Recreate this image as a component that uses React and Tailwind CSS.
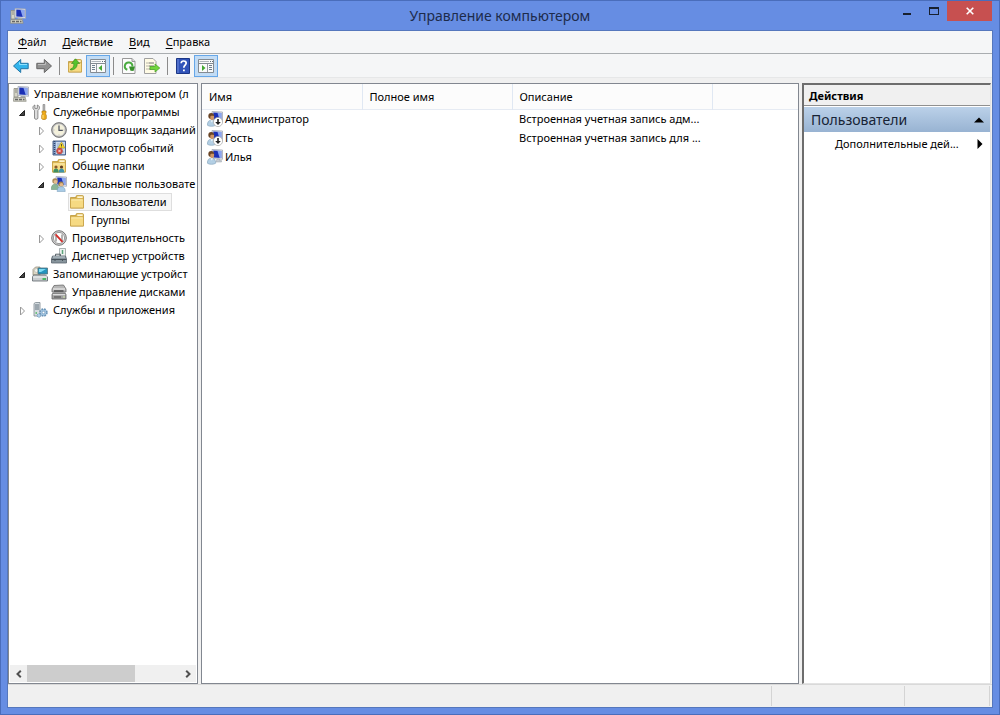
import React from "react";

function Icon({ children, className = "" }) {
  return (
    <svg viewBox="0 0 16 16" width="16" height="16" className={`block shrink-0 ${className}`} aria-hidden="true">
      {children}
    </svg>
  );
}

function Screen() {
  return (
    <>
      <path d="M5 .5 15.500 1V10.300L5 9.500Z" fill="#dfe4ec" stroke="#a4abb8" strokeWidth=".8" />
      <path d="M6.300 1.600 14.300 2.100V9L6.300 8.400Z" fill="#1b30b5" />
      <path d="M10.500 1.900 14.300 2.100V9L12.700 8.900Z" fill="#8ba6f0" />
    </>
  );
}

function ComputerIcon() {
  return (
    <Icon>
      <path d="M1 2.500h4v8.500H1z" fill="#d6d5c8" stroke="#8b8b80" strokeWidth=".8" />
      <path d="M2 4h2M2 6h2" stroke="#77776d" strokeWidth=".8" />
      <Screen />
      <path d="M8 10h4l1 1.500H7z" fill="#a6acb2" />
      <path d="M.7 11.500h11.500l1 3.800H.5z" fill="#d0d0c4" stroke="#8b8b80" strokeWidth=".7" />
      <path d="M2 13.500h9.500" stroke="#666" strokeWidth="1.500" strokeDasharray="3 1" />
    </Icon>
  );
}

function ToolsIcon() {
  return (
    <Icon>
      <path d="M2.900 1v3.400h2.400V1c1.700.6 2.200 1.700 2.200 2.800 0 1.300-.8 2-1.600 2.500v7.800c0 1.600-3.400 1.600-3.400 0V6.300C1.700 5.800.9 5 .9 3.800c0-1.200.5-2.300 2-2.800z" fill="#ddd" stroke="#747474" strokeWidth=".8" />
      <path d="M11 .5h1.800v6H11z" fill="#bbb" stroke="#777" strokeWidth=".6" />
      <path d="M10 7h4v2l-.6.8.9 1.500v3.200c0 1.400-4.600 1.400-4.600 0v-3.200l.8-1.500-.5-.8z" fill="#efac19" stroke="#b37b16" strokeWidth=".7" />
      <path d="M11 11v3.500" stroke="#ffe18b" />
    </Icon>
  );
}

function ClockIcon() {
  return (
    <Icon>
      <circle cx="8" cy="8" r="7.400" fill="#aaa" stroke="#686868" strokeWidth=".8" />
      <circle cx="8" cy="8" r="5.900" fill="#f4f1dc" stroke="#ddd" strokeWidth=".6" />
      <path d="M8 3.500V8.300H11.800" fill="none" stroke="#4d5360" strokeWidth="1.200" />
      <path d="M8 2.500v1M8 12.500v1M2.500 8h1M12.500 8h1" stroke="#999" strokeWidth=".7" />
    </Icon>
  );
}

function EventIcon() {
  return (
    <Icon>
      <path d="M2 1h12.500v14H2z" fill="#8aa6cd" stroke="#3f5785" strokeWidth=".9" />
      <path d="M5 2h9v12H5z" fill="#cbd8ec" />
      <path d="M3.500 1v14" stroke="#33476f" strokeDasharray="1 1" strokeWidth="1.500" />
      <path d="M6 4h7M6 6h7M6 8h7M6 12h7" stroke="#7690b7" strokeWidth=".6" />
      <path d="M10.500 2 14 8H7z" fill="#f9d92a" stroke="#a99016" strokeWidth=".5" />
      <path d="M10.500 4v2M10.500 6.500v.8" stroke="#333" strokeWidth=".8" />
      <circle cx="8.500" cy="11" r="3" fill="#d84b43" stroke="#963630" strokeWidth=".5" />
      <path d="m7.300 9.800 2.400 2.400m0-2.400-2.400 2.400" stroke="#fff" strokeWidth=".8" />
    </Icon>
  );
}

function FolderShape() {
  return (
    <>
      <path d="M1.500 3.500h5.500V2.600c0-.6.3-1 .8-1h5.700c.6 0 1 .4 1 1V14h-13z" fill="#e7c05a" stroke="#b99539" strokeWidth=".8" />
      <path d="M8.300 2.400h5.300v1.500H8.300z" fill="#fffbe3" />
      <path d="M1.500 5h13v9h-13z" fill="#f6da83" stroke="#c8a249" strokeWidth=".8" />
      <path d="M2.300 5.900h11.400" stroke="#fff0b5" />
    </>
  );
}

function FolderIcon() {
  return <Icon><FolderShape /></Icon>;
}

function SharedFolderIcon() {
  return (
    <Icon>
      <FolderShape />
      <circle cx="5" cy="9" r="1.600" fill="#8b5a2b" />
      <path d="M2.300 14.500c0-3 1-4 2.700-4s2.700 1 2.700 4z" fill="#3f8f62" />
      <circle cx="10.500" cy="9" r="1.600" fill="#623c23" />
      <path d="M7.800 14.500c0-3 1.200-4 2.700-4s2.800 1 2.800 4z" fill="#3f93a8" />
    </Icon>
  );
}

function UsersIcon() {
  return (
    <Icon>
      <Screen />
      <circle cx="4" cy="5" r="2.700" fill="#a98a58" />
      <circle cx="4.500" cy="5.800" r="1.900" fill="#e6bd8f" />
      <path d="M.3 13.500c0-4 1.500-5.300 3.700-5.300s3.700 1.500 3.700 5.300z" fill="#8ab595" stroke="#5f8a6e" strokeWidth=".5" />
      <circle cx="10" cy="8" r="2.600" fill="#a1854f" />
      <circle cx="10.400" cy="8.700" r="1.800" fill="#e3b788" />
      <path d="M6.200 15.600c0-3.700 1.500-4.900 4-4.900s4 1.200 4 4.900z" fill="#a8cbe6" stroke="#6c93b3" strokeWidth=".5" />
    </Icon>
  );
}

function UserIcon({ disabled }) {
  return (
    <Icon>
      <Screen />
      <path d="M10 10h2.500v1.500h2V13H9z" fill="#c6cbd2" stroke="#99a0aa" strokeWidth=".5" />
      <circle cx="4.200" cy="5" r="2.900" fill="#6b4526" />
      <path d="M3.400 5.200c1-.8 2.500-.6 3.700-.1.300 2.300-.6 4.400-2 4.400-1.400 0-2.200-1.900-1.700-4.300z" fill="#cf9765" />
      <path d="M.4 14.200c0-3.400 1.300-5 4-5 2.800 0 4.300 1.600 4.300 5-1.800 1.500-6.800 1.500-8.300 0z" fill="#b3cfe4" stroke="#7f9fb9" strokeWidth=".6" />
      <path d="m3.500 9.300 1.300 2.200 1.300-2.200" fill="#eef6fb" />
      {disabled && (
        <>
          <circle cx="11" cy="11" r="4.600" fill="#fff" stroke="#a5a5a5" strokeWidth=".7" />
          <path d="M10.200 8h1.600v3h2L11 14l-2.800-3h2z" fill="#222" />
        </>
      )}
    </Icon>
  );
}

function GaugeIcon() {
  return (
    <Icon>
      <circle cx="8" cy="8" r="7.300" fill="#d5d5d5" stroke="#747474" />
      <circle cx="8" cy="8" r="5.600" fill="#fff" stroke="#888" strokeWidth=".8" />
      <path d="M5 11.500V6M11 4.500V11" stroke="#555" strokeWidth=".9" />
      <path d="m4.500 4.300 7 7.500" stroke="#d32d29" strokeWidth="1.900" />
    </Icon>
  );
}

function DeviceIcon() {
  return (
    <Icon>
      <path d="M8.500.5h6v9h-6z" fill="#edf1ef" stroke="#8b9493" strokeWidth=".7" />
      <path d="M11.500 2v4" stroke="#5ba57b" strokeWidth="1.500" />
      <path d="M4.500 8V6.200h5V8" fill="none" stroke="#555f65" />
      <path d="M1.500 8h13l1 3v4H.5v-4z" fill="#87949c" stroke="#5a656e" strokeWidth=".8" />
      <path d="M2 9h12" stroke="#c2cdd3" />
      <path d="M.7 11.500h14.600M4 11v2M11.500 11v2" stroke="#48535b" />
    </Icon>
  );
}

function StorageIcon() {
  return (
    <Icon>
      <path d="M1 3.500 3.500 1H8v8H1z" fill="#ddd7c4" stroke="#888171" strokeWidth=".7" />
      <circle cx="4.500" cy="4.500" r="2" fill="#f2f1e7" stroke="#aaa" strokeWidth=".5" />
      <path d="M6 2h9.500v6H6z" fill="#2392bd" stroke="#50717c" strokeWidth=".8" />
      <path d="M7 3h7l-5 3H7z" fill="#7edcf4" />
      <path d="M1.500 9h12l2 2v4H.5v-4z" fill="#c8cccf" stroke="#5d656b" strokeWidth=".8" />
      <path d="M1 11h14" stroke="#f4f5f5" />
      <path d="M10.500 13h3.500" stroke="#16ae37" strokeWidth="1.400" />
    </Icon>
  );
}

function DiskIcon() {
  return (
    <Icon>
      <path d="m3 1.500 9.500-.5 2.500 4v3H1V5z" fill="#b6b6b6" stroke="#6a6a6a" strokeWidth=".8" />
      <path d="M2 5h12" stroke="#f0f0f0" />
      <path d="M3 7h9.500" stroke="#4d4d4d" strokeWidth="1.500" />
      <path d="M2 9h12l1 1.500V15H1v-4.500z" fill="#a0a0a0" stroke="#666" strokeWidth=".8" />
      <path d="M2 10.700h12" stroke="#ececec" />
      <path d="M3 13h7" stroke="#4b4b4b" />
      <path d="M12 13h2" stroke="#d4ecac" />
    </Icon>
  );
}

function ServicesIcon() {
  return (
    <Icon>
      <path d="M2 1.500 3.500.5H8v13.500H2z" fill="#d7dde1" stroke="#7d8990" strokeWidth=".8" />
      <path d="M3 3h4M3 5h4M3 7h4" stroke="#60717d" />
      <path d="M3.500 11h1.500" stroke="#49b75b" strokeWidth="1.500" />
      <circle cx="11.500" cy="10.500" r="3.400" fill="#a8cae6" stroke="#6c95b7" strokeWidth="1.700" strokeDasharray="1.700 1" />
      <circle cx="11.500" cy="10.500" r="1.300" fill="#fff" stroke="#6c95b7" strokeWidth=".7" />
      <circle cx="7" cy="13.500" r="1.800" fill="#afd0e8" stroke="#6c95b7" strokeDasharray="1.200 .7" />
    </Icon>
  );
}

function ArrowIcon({ forward }) {
  return (
    <Icon>
      {forward ? (
        <path d="M.8 5.300h7.500V1.500L15.500 8l-7.200 6.500v-3.800H.8z" fill="#929292" stroke="#666" />
      ) : (
        <path d="M15.200 5.300H7.700V1.500L.5 8l7.200 6.500v-3.800h7.500z" fill="#32b4ec" stroke="#2476a7" />
      )}
      <path d={forward ? "M2 6.500h7.500V4.300" : "M14 6.500H6.500V4.300"} stroke={forward ? "#bebebe" : "#8de1ff"} fill="none" />
    </Icon>
  );
}

function UpFolderIcon() {
  return (
    <Icon>
      <FolderShape />
      <path d="M3.500 11c2.500-.5 3.500-2.500 3.300-5.500H4.500L8.500.8l4.200 4.700h-2.500c.2 4-2.700 6.500-6.700 6.500z" fill="#55c42d" stroke="#348519" strokeWidth=".6" />
    </Icon>
  );
}

function PaneIcon({ right }) {
  return (
    <Icon>
      <path d="M.5 1.500h15v13H.5z" fill="#fafafa" stroke="#848b92" />
      <path d="M1 5.500h14" stroke="#848b92" />
      <path d="M1.500 3.500h9.500" stroke="#b1b7bc" />
      <path d="M12 3.500h1M14 3.500h1" stroke="#5f6d78" />
      {right ? (
        <>
          <path d="M9.500 6v8" stroke="#9198a0" />
          <path d="M11 7.500h3M11 9.500h3M11 11.500h3" stroke="#6f7f8c" />
          <path d="m4 7 3.500 3L4 13z" fill="#43a832" />
        </>
      ) : (
        <>
          <path d="M6.500 6v8" stroke="#9198a0" />
          <path d="M2 7.500h3M2 9.500h3M2 11.500h3" stroke="#6f7f8c" />
          <path d="M12 7 8.500 10 12 13z" fill="#43a832" />
        </>
      )}
    </Icon>
  );
}

function RefreshIcon() {
  return (
    <Icon>
      <path d="M1.500.5H11l3 3v12H1.500z" fill="#fcfcfc" stroke="#999" />
      <path d="M11 .5v3h3" fill="#ddd" stroke="#999" />
      <path d="M6.300 11.800a3.800 3.800 0 1 1 5.100-3.300" fill="none" stroke="#4aab40" strokeWidth="2" />
      <path d="M8 8.500h6L12.500 13 9.500 12.800z" fill="#39912e" />
    </Icon>
  );
}

function ExportIcon() {
  return (
    <Icon>
      <path d="M.5.5H9l3 3v12H.5z" fill="#fffbe5" stroke="#a0a0a0" />
      <path d="M2.500 5h1M4.500 5H10M2.500 8h1M4.500 8H10M2.500 11h1M4.500 11H10" stroke="#727272" />
      <path d="M6 8.500h5V6L15.800 10 11 14v-2.500H6z" fill="#71d63c" stroke="#48a024" strokeWidth=".7" />
    </Icon>
  );
}

function HelpIcon() {
  return (
    <Icon>
      <path d="M1.500.5h13v15h-13z" fill="#3053b9" stroke="#1b3686" />
      <path d="M3 1v14" stroke="#6f8cdb" />
      <path d="M6.200 5.300c0-3 5-3 5-.2 0 2-2.400 2-2.400 4.700" stroke="#fff" strokeWidth="1.700" fill="none" />
      <path d="M8 11.500h1.800v1.800H8z" fill="#fff" />
    </Icon>
  );
}

const tree = [
  { text: "Управление компьютером (л", icon: ComputerIcon, level: 0 },
  { text: "Служебные программы", icon: ToolsIcon, level: 1, state: "open" },
  { text: "Планировщик заданий", icon: ClockIcon, level: 2, state: "closed" },
  { text: "Просмотр событий", icon: EventIcon, level: 2, state: "closed" },
  { text: "Общие папки", icon: SharedFolderIcon, level: 2, state: "closed" },
  { text: "Локальные пользовате", icon: UsersIcon, level: 2, state: "open" },
  { text: "Пользователи", icon: FolderIcon, level: 3, selected: true },
  { text: "Группы", icon: FolderIcon, level: 3 },
  { text: "Производительность", icon: GaugeIcon, level: 2, state: "closed" },
  { text: "Диспетчер устройств", icon: DeviceIcon, level: 2 },
  { text: "Запоминающие устройст", icon: StorageIcon, level: 1, state: "open" },
  { text: "Управление дисками", icon: DiskIcon, level: 2 },
  { text: "Службы и приложения", icon: ServicesIcon, level: 1, state: "closed" },
];

const indents = ["pl-[2px]", "pl-[3px]", "pl-[22px]", "pl-[40px]"];

const users = [
  { name: "Администратор", description: "Встроенная учетная запись адм...", disabled: true },
  { name: "Гость", description: "Встроенная учетная запись для ...", disabled: true },
  { name: "Илья", description: "" },
];

function Expander({ state }) {
  return (
    <svg viewBox="0 0 19 16" width="19" height="16" className="block shrink-0" aria-hidden="true">
      {state === "open" && <path d="M11.500 6.500V11.500H6.500z" fill="#444" stroke="#222" />}
      {state === "closed" && <path d="M7.500 5 11.500 9 7.500 13z" fill="#fff" stroke="#999" />}
    </svg>
  );
}

function TreeRow({ item }) {
  const Glyph = item.icon;
  return (
    <li role="treeitem" aria-level={item.level + 1} aria-selected={!!item.selected} className={`flex h-[18px] items-center ${indents[item.level]}`}>
      {item.level > 0 && <Expander state={item.state} />}
      <button
        type="button"
        className={`flex h-[18px] items-center whitespace-nowrap border ${item.level === 3 ? "gap-[6px] pr-1" : "gap-[5px] pr-[2px]"} ${item.selected ? "border-[#dedede] bg-[#f7f7f7]" : "border-transparent"} ${item.level > 0 ? "-ml-px" : ""}`}
      >
        <Glyph />
        <span>{item.text}</span>
      </button>
    </li>
  );
}

function Separator() {
  return <div className="h-[18px] w-px shrink-0 bg-[#8b8b8b]" />;
}

function ToolButton({ label, active, children }) {
  return (
    <button
      type="button"
      aria-label={label}
      className={active ? "flex h-[22px] w-6 items-center justify-center border border-[#66a7e8] bg-[#c2dcf5]" : "flex h-[22px] w-4 items-center justify-center"}
    >
      {children}
    </button>
  );
}

function MenuItem({ first, rest }) {
  return (
    <button type="button">
      <span className="underline underline-offset-2">{first}</span>{rest}
    </button>
  );
}

export default function App() {
  return (
    <div className="flex h-screen flex-col border border-[#4a6dbb] bg-[#668de3] px-[7px] pb-[7px] font-['Noto_Sans','Open_Sans',sans-serif] text-[11px] leading-4 text-black">
      <header className="grid h-[30px] shrink-0 grid-cols-[1fr_auto_1fr]">
        <div className="flex items-center pl-[2px]"><ComputerIcon /></div>
        <h1 className="self-center text-[14px] leading-5 text-[#1d2b4b]">Управление компьютером</h1>
        <div className="flex items-start justify-end">
          <button type="button" aria-label="Свернуть" className="flex h-5 w-[27px] items-center justify-center">
            <svg viewBox="0 0 10 10" width="10" height="10" aria-hidden="true"><path d="M1 7h8v2H1z" fill="#18202f" /></svg>
          </button>
          <button type="button" aria-label="Развернуть" className="flex h-5 w-[27px] items-center justify-center">
            <svg viewBox="0 0 10 10" width="10" height="10" aria-hidden="true"><path d="M0 1h10v8H0zM1 3v5h8V3z" fill="#18202f" fillRule="evenodd" /></svg>
          </button>
          <button type="button" aria-label="Закрыть" className="flex h-5 w-[45px] items-center justify-center bg-[#c75050]">
            <svg viewBox="0 0 8 8" width="8" height="8" aria-hidden="true"><path d="m.7.7 6.600 6.600m0-6.600L.7 7.300" stroke="#fff" strokeWidth="1.600" /></svg>
          </button>
        </div>
      </header>

      <div className="flex min-h-0 flex-1 flex-col bg-[#f0f0f0] outline-1 outline-[#5577bd]">
        <nav className="flex h-[23px] shrink-0 items-center gap-4 border-b border-[#a9adb0] bg-[#f5f6f7] px-[10px]">
          <MenuItem first="Ф" rest="айл" />
          <MenuItem first="Д" rest="ействие" />
          <MenuItem first="В" rest="ид" />
          <MenuItem first="С" rest="правка" />
        </nav>

        <div className="flex h-6 shrink-0 items-center gap-[7px] border-b border-[#e6e7e8] bg-[#f5f6f7] px-[5px]">
          <ToolButton label="Назад"><ArrowIcon /></ToolButton>
          <ToolButton label="Вперед"><ArrowIcon forward /></ToolButton>
          <Separator />
          <div className="flex items-center gap-[3px]">
            <ToolButton label="Вверх"><UpFolderIcon /></ToolButton>
            <ToolButton label="Дерево консоли" active><PaneIcon /></ToolButton>
            <Separator />
          </div>
          <ToolButton label="Обновить"><RefreshIcon /></ToolButton>
          <ToolButton label="Экспортировать список"><ExportIcon /></ToolButton>
          <Separator />
          <div className="flex items-center gap-[3px]">
            <ToolButton label="Справка"><HelpIcon /></ToolButton>
            <ToolButton label="Панель действий" active><PaneIcon right /></ToolButton>
          </div>
        </div>

        <main className="mt-[5px] grid min-h-0 flex-1 grid-cols-[190px_minmax(0,1fr)_189px] gap-[3px] pr-px">
          <section className="flex min-w-0 flex-col border border-[#828790] bg-white px-px pb-px">
            <ul role="tree" aria-label="Дерево консоли" className="min-h-0 flex-1 overflow-hidden pt-px">
              {tree.map((item) => <TreeRow key={item.text} item={item} />)}
            </ul>
            <div className="flex h-[17px] shrink-0 bg-[#f0f0f0]">
              <button type="button" aria-label="Прокрутить влево" className="flex w-[17px] items-center justify-center">
                <svg viewBox="0 0 8 8" width="8" height="8" aria-hidden="true"><path d="M5.800.8 2.500 4l3.300 3.200" fill="none" stroke="#505050" strokeWidth="2" /></svg>
              </button>
              <div className="flex-1"><div className="h-full w-[71%] bg-[#cdcdcd]" /></div>
              <button type="button" aria-label="Прокрутить вправо" className="flex w-[17px] items-center justify-center">
                <svg viewBox="0 0 8 8" width="8" height="8" aria-hidden="true"><path d="M2.200.8 5.500 4 2.200 7.200" fill="none" stroke="#505050" strokeWidth="2" /></svg>
              </button>
            </div>
          </section>

          <section className="min-w-0 overflow-hidden border border-[#828790] bg-white">
            <table className="w-full table-fixed border-collapse text-left">
              <colgroup>
                <col className="w-[160px]" />
                <col className="w-[150px]" />
                <col className="w-[200px]" />
                <col />
              </colgroup>
              <thead>
                <tr className="h-[25px] border-b border-[#e6ebf3] bg-[#fcfcfc]">
                  <th scope="col" className="border-r border-[#e0e8f3] px-[7px] pt-px font-normal">Имя</th>
                  <th scope="col" className="border-r border-[#e0e8f3] px-[7px] pt-px font-normal">Полное имя</th>
                  <th scope="col" className="border-r border-[#e0e8f3] px-[7px] pt-px font-normal">Описание</th>
                  <td />
                </tr>
              </thead>
              <tbody>
                {users.map((user) => (
                  <tr key={user.name} className="h-[19px]">
                    <td className="pl-[5px]">
                      <div className="flex items-center gap-[2px]"><UserIcon disabled={user.disabled} />{user.name}</div>
                    </td>
                    <td />
                    <td className="whitespace-nowrap pl-[7px]">{user.description}</td>
                    <td />
                  </tr>
                ))}
              </tbody>
            </table>
          </section>

          <aside className="min-w-0 border-2 border-b border-r border-[#6d6d6d] border-b-[#e3e3e3] border-r-[#e3e3e3] bg-white">
            <h2 className="h-[21px] border-b border-[#909090] bg-[#f0f0f0] pl-[5px] pt-[3px] font-bold">Действия</h2>
            <button type="button" className="mt-px flex h-[25px] w-full items-center justify-between bg-linear-to-b from-[#bbd1e9] to-[#98b3d2] pl-[7px] pr-[6px] text-[14px] leading-5 text-[#172335]">
              Пользователи
              <svg viewBox="0 0 10 6" width="10" height="6" aria-hidden="true"><path d="m0 5.500 5-5 5 5z" fill="#000" /></svg>
            </button>
            <button type="button" className="flex h-6 w-full items-center justify-between whitespace-nowrap pl-[31px] pr-[7px]">
              Дополнительные дей...
              <svg viewBox="0 0 6 10" width="6" height="10" aria-hidden="true"><path d="m.5 0 5 5-5 5z" fill="#000" /></svg>
            </button>
          </aside>
        </main>

        <footer className="flex h-[23px] shrink-0 justify-end border-t border-[#d9d9d9] py-px pr-[2px]">
          <div className="w-[133px] border-l border-[#d4d4d4]" />
          <div className="w-[86px] border-x border-[#d4d4d4]" />
        </footer>
      </div>
    </div>
  );
}
